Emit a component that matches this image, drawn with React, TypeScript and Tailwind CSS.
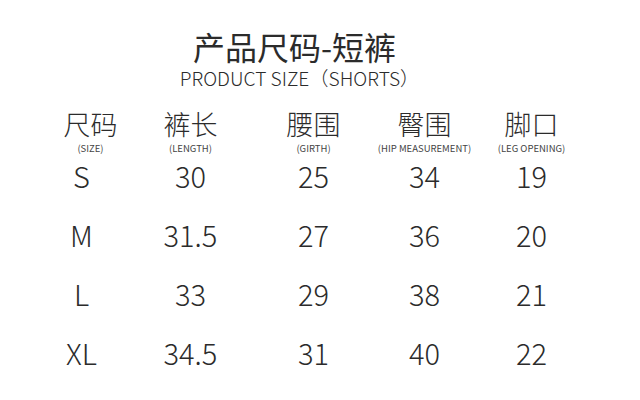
import React from "react";

const font = { fontFamily: '"Noto Sans CJK SC", "Noto Sans", sans-serif' };

const headers = [
  { zh: "尺码", en: "(SIZE)", extra: "pl-[14px]" },
  { zh: "裤长", en: "(LENGTH)", extra: "" },
  { zh: "腰围", en: "(GIRTH)", extra: "" },
  { zh: "臀围", en: "(HIP MEASUREMENT)", extra: "" },
  { zh: "脚口", en: "(LEG OPENING)", extra: "" },
];

const rows = [
  ["S", "30", "25", "34", "19"],
  ["M", "31.5", "27", "36", "20"],
  ["L", "33", "29", "38", "21"],
  ["XL", "34.5", "31", "40", "22"],
];

export default function App() {
  return (
    <div
      className="w-[640px] h-[400px] bg-white text-[#2b2b2b] overflow-hidden flex flex-col"
      style={font}
    >
      <div className="flex flex-col items-center pr-[51px] pt-[30px]">
        <div className="text-[32px] leading-[32px] font-normal">产品尺码-短裤</div>
        <div className="text-[19.2px] leading-[20px] font-light mt-[6px] ml-[10px]">PRODUCT SIZE（SHORTS）</div>
      </div>
      <div className="grid grid-cols-[107px_107px_139px_83px_131px] pl-[30px] mt-[22px]">
        {headers.map((h) => (
          <div key={h.zh} className={`flex flex-col items-center ${h.extra}`}>
            <div className="text-[27px] leading-none whitespace-nowrap font-light">{h.zh}</div>
            <div className="text-[9.5px] leading-none mt-[7px] whitespace-nowrap font-normal text-[#444]">{h.en}</div>
          </div>
        ))}
      </div>
      <div className="flex flex-col mt-[-8px]">
        {rows.map((r) => (
          <div
            key={r[0]}
            className="grid grid-cols-[107px_107px_139px_83px_131px] pl-[30px] h-[59px] items-center"
          >
            {r.map((c, i) => (
              <div
                key={i}
                className={`flex justify-center text-[29px] leading-none whitespace-nowrap font-light ${i === 0 ? "pr-[4px]" : ""}`}
              >
                {c}
              </div>
            ))}
          </div>
        ))}
      </div>
    </div>
  );
}
